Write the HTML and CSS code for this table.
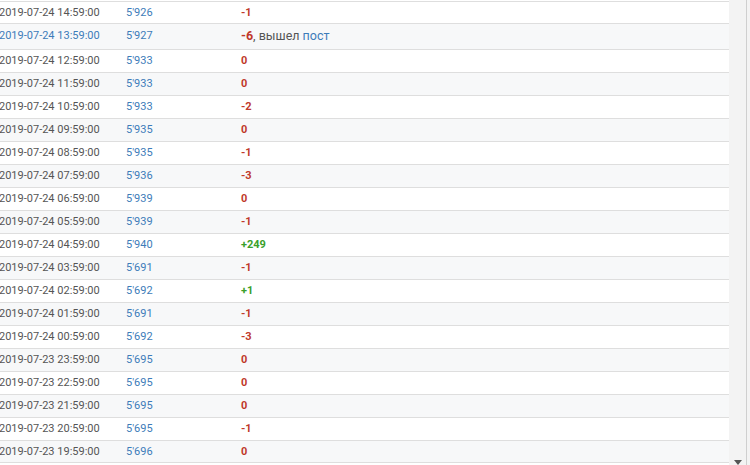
FILE: index.html
```html
<!DOCTYPE html>
<html lang="ru">
<head>
    <meta charset="UTF-8">
    <title>История подписчиков</title>
    <link rel="stylesheet" href="styles.css">
</head>
<body>
    <div class="page">
        <div class="log">
            <div class="row first"><span class="date">2019-07-24 14:59:00</span><span class="num">5'926</span><span class="neg">-1</span></div>
            <div class="row tall"><span class="date hl">2019-07-24 13:59:00</span><span class="num">5'927</span><span class="note"><span class="neg">-6</span>, вышел <span class="link">пост</span></span></div>
            <div class="row"><span class="date">2019-07-24 12:59:00</span><span class="num">5'933</span><span class="neg">0</span></div>
            <div class="row"><span class="date">2019-07-24 11:59:00</span><span class="num">5'933</span><span class="neg">0</span></div>
            <div class="row"><span class="date">2019-07-24 10:59:00</span><span class="num">5'933</span><span class="neg">-2</span></div>
            <div class="row"><span class="date">2019-07-24 09:59:00</span><span class="num">5'935</span><span class="neg">0</span></div>
            <div class="row"><span class="date">2019-07-24 08:59:00</span><span class="num">5'935</span><span class="neg">-1</span></div>
            <div class="row"><span class="date">2019-07-24 07:59:00</span><span class="num">5'936</span><span class="neg">-3</span></div>
            <div class="row"><span class="date">2019-07-24 06:59:00</span><span class="num">5'939</span><span class="neg">0</span></div>
            <div class="row"><span class="date">2019-07-24 05:59:00</span><span class="num">5'939</span><span class="neg">-1</span></div>
            <div class="row"><span class="date">2019-07-24 04:59:00</span><span class="num">5'940</span><span class="pos">+249</span></div>
            <div class="row"><span class="date">2019-07-24 03:59:00</span><span class="num">5'691</span><span class="neg">-1</span></div>
            <div class="row"><span class="date">2019-07-24 02:59:00</span><span class="num">5'692</span><span class="pos">+1</span></div>
            <div class="row"><span class="date">2019-07-24 01:59:00</span><span class="num">5'691</span><span class="neg">-1</span></div>
            <div class="row"><span class="date">2019-07-24 00:59:00</span><span class="num">5'692</span><span class="neg">-3</span></div>
            <div class="row"><span class="date">2019-07-23 23:59:00</span><span class="num">5'695</span><span class="neg">0</span></div>
            <div class="row"><span class="date">2019-07-23 22:59:00</span><span class="num">5'695</span><span class="neg">0</span></div>
            <div class="row"><span class="date">2019-07-23 21:59:00</span><span class="num">5'695</span><span class="neg">0</span></div>
            <div class="row"><span class="date">2019-07-23 20:59:00</span><span class="num">5'695</span><span class="neg">-1</span></div>
            <div class="row last"><span class="date">2019-07-23 19:59:00</span><span class="num">5'696</span><span class="neg">0</span></div>
        </div>
        <div class="scrollbar">
            <div class="track"></div>
            <div class="arrow"></div>
        </div>
    </div>
</body>
</html>
```

FILE: styles.css
```css
body {
    margin: 0;
    font-family: Roboto, 'Liberation Sans', sans-serif;
    font-size: 11px;
    color: #555;
    background: #fff;
    overflow: hidden;
}
.page {
    display: flex;
    height: 465px;
    overflow: hidden;
}
.log {
    flex: 1;
    padding-top: 1px;
}
.row {
    display: flex;
    align-items: center;
    height: 23px;
    box-sizing: border-box;
    border-top: 1px solid #dedede;
    line-height: 14px;
    white-space: nowrap;
}
.row:nth-child(even) { background: #f7f8f9; }
.row.first { height: 22px; }
.row.tall { height: 26px; padding-bottom: 2px; }
.row.last { border-bottom: 1px solid #dedede; }
.date {
    width: 127px;
    margin-left: -1px;
    flex-shrink: 0;
}
.num {
    width: 115px;
    flex-shrink: 0;
    color: #3d7cb9;
}
.note { font-size: 12.5px; }
.hl { color: #3d7cb9; }
.neg {
    color: #c0392b;
    font-weight: bold;
}
.pos {
    color: #3aa02a;
    font-weight: bold;
}
.link { color: #3d7cb9; }
.scrollbar {
    width: 21px;
    display: flex;
    background: #f3f3f3;
    position: relative;
}
.track {
    flex: 1;
    border-right: 1px solid #cfcfcf;
    margin-right: 3px;
}
.arrow {
    position: absolute;
    left: 5px;
    bottom: 0;
    width: 0;
    height: 0;
    border-left: 4px solid transparent;
    border-right: 4px solid transparent;
    border-top: 5px solid #555;
}
```
